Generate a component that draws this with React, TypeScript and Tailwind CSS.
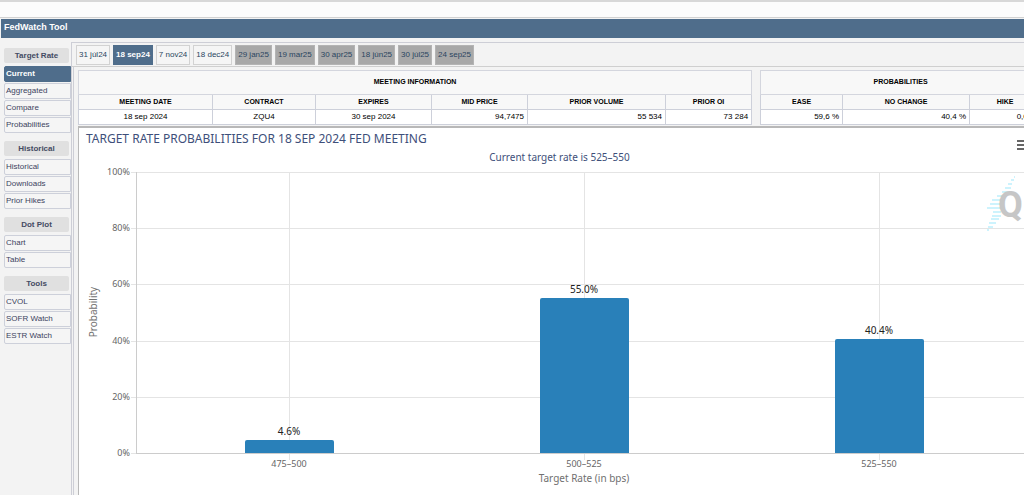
const NAV = [
  { title: "Target Rate", items: ["Current", "Aggregated", "Compare", "Probabilities"] },
  { title: "Historical", items: ["Historical", "Downloads", "Prior Hikes"] },
  { title: "Dot Plot", items: ["Chart", "Table"] },
  { title: "Tools", items: ["CVOL", "SOFR Watch", "ESTR Watch"] },
];

const MEETINGS = [
  { label: "31 júl24" },
  { label: "18 sep24", active: true },
  { label: "7 nov24" },
  { label: "18 dec24" },
  { label: "29 jan25", far: true },
  { label: "19 mar25", far: true },
  { label: "30 apr25", far: true },
  { label: "18 jún25", far: true },
  { label: "30 júl25", far: true },
  { label: "24 sep25", far: true },
];

const INFO = [
  { head: "MEETING DATE", value: "18 sep 2024", width: "w-[134px]" },
  { head: "CONTRACT", value: "ZQU4", width: "w-[103px]" },
  { head: "EXPIRES", value: "30 sep 2024", width: "w-[116px]" },
  { head: "MID PRICE", value: "94,7475", width: "w-[96px]", right: true },
  { head: "PRIOR VOLUME", value: "55 534", width: "w-[138px]", right: true },
  { head: "PRIOR OI", value: "73 284", width: "w-[86px]", right: true },
];

const PROBS = [
  { head: "EASE", value: "59,6 %", width: "w-[82px]", right: true },
  { head: "NO CHANGE", value: "40,4 %", width: "w-[127px]", right: true },
  { head: "HIKE", value: "0,0 %", width: "w-[71px]", right: true },
];

const BARS = [
  { range: "475–500", value: 4.6, x: 210 },
  { range: "500–525", value: 55.0, x: 505 },
  { range: "525–550", value: 40.4, x: 800 },
];

const TICKS = [0, 20, 40, 60, 80, 100];

// left edge, top and length of each logo stripe
const STRIPES = [
  [935, 12, 1],
  [932, 15, 3],
  [929, 19, 4],
  [926, 23, 6],
  [923, 27, 8],
  [918, 31, 6],
  [913, 35, 9],
  [911, 39, 11],
  [908, 43, 14],
  [914, 47, 8],
  [913, 51, 9],
  [912, 54, 8],
  [910, 58, 7],
  [909, 62, 5],
  [908, 65, 2],
];

type Column = { head: string; value: string; width: string; right?: boolean };

function DataTable({ title, columns }: { title: string; columns: Column[] }) {
  return (
    <table className="w-full table-fixed border-collapse border border-[#cdd0da] bg-white text-[8px] leading-[10px] text-black">
      <colgroup>
        {columns.map((c) => (
          <col key={c.head} className={c.width} />
        ))}
      </colgroup>
      <thead className="bg-[#f8f8f8] text-[7px]">
        <tr className="h-6">
          <th colSpan={columns.length} className="border border-[#d4d6de] pb-0.5 font-bold">
            {title}
          </th>
        </tr>
        <tr className="h-[15px]">
          {columns.map((c) => (
            <th key={c.head} className="border border-[#cdd0da] font-bold">
              {c.head}
            </th>
          ))}
        </tr>
      </thead>
      <tbody>
        <tr className="h-[15px]">
          {columns.map((c) => (
            <td
              key={c.head}
              className={`border border-[#cdd0da] px-[3px] ${c.right ? "text-right" : "text-center"}`}
            >
              {c.value}
            </td>
          ))}
        </tr>
      </tbody>
    </table>
  );
}

function Sidebar() {
  return (
    <nav className="flex w-[71px] shrink-0 flex-col gap-2 pt-[10px] pl-1">
      {NAV.map((group) => (
        <section key={group.title}>
          <h2 className="mr-0.5 mb-[3px] h-[15px] rounded-xs bg-[#e0e0e0] text-center text-[8px] leading-[15px] font-bold text-[#444b63]">
            {group.title}
          </h2>
          <ul className="flex flex-col gap-px">
            {group.items.map((item) => (
              <li key={item}>
                <a
                  href="#"
                  className={`block h-4 rounded-l-xs border pl-px text-[8px] leading-[14px] ${
                    item === "Current"
                      ? "border-[#4f6d8b] bg-[#4f6d8b] font-bold text-white"
                      : "border-[#cdd0da] bg-[#f5f5f5] text-[#3c4360]"
                  }`}
                >
                  {item}
                </a>
              </li>
            ))}
          </ul>
        </section>
      ))}
    </nav>
  );
}

function Tabs() {
  return (
    <div className="flex h-6 items-start gap-[3px] border-b border-[#cfcfcf] pt-0.5 pl-1">
      {MEETINGS.map((m) => (
        <button
          key={m.label}
          type="button"
          className={`h-5 border px-0.5 text-[8px] whitespace-nowrap ${
            m.active
              ? "border-[#4f6d8b] bg-[#4f6d8b] font-bold text-white"
              : m.far
                ? "border-[#b4b4b4] bg-[#a8a8a8] text-[#2a4560]"
                : "border-[#d2d2d2] bg-[#f5f5f5] text-[#2a4560]"
          }`}
        >
          {m.label}
        </button>
      ))}
    </div>
  );
}

function ProbabilityChart() {
  const y = (v: number) => Math.round(289 - v * 2.81);

  return (
    <svg
      viewBox="0 0 961 331"
      className="block w-full font-['Noto_Sans',sans-serif]"
      role="img"
      aria-label="Target rate probabilities"
    >
      {/* Grid */}
      <g stroke="#e4e4e4" shapeRendering="crispEdges">
        {TICKS.map((t) => (
          <line key={t} x1="52" x2="953" y1={y(t)} y2={y(t)} />
        ))}
        {BARS.map((b) => (
          <line key={b.range} x1={b.x} x2={b.x} y1="8" y2="296" />
        ))}
      </g>
      <g stroke="#cccccc" shapeRendering="crispEdges">
        <line x1="57" x2="57" y1="8" y2="289" />
        <line x1="57" x2="953" y1="289" y2="289" />
      </g>

      {/* Logo */}
      <g fill="#cdf3fd">
        {STRIPES.map(([x, top, w]) => (
          <rect key={top} x={x} y={top} width={w} height="2" />
        ))}
      </g>
      <text x="919" y="53" fontSize="36" fill="#c6c6c6" className="font-['Roboto',sans-serif] font-bold">
        Q
      </text>

      {/* Bars */}
      {BARS.map((b) => (
        <g key={b.range} textAnchor="middle">
          <path
            d={`M${b.x - 44} 289V${y(b.value) + 2}q0 -2 2 -2h85q2 0 2 2V289z`}
            fill="#2980b9"
          />
          <text x={b.x} y={y(b.value) - 5} fontSize="10" fill="#222">
            {b.value.toFixed(1)}%
          </text>
          <text x={b.x} y="303" fontSize="9" fill="#666">
            {b.range}
          </text>
        </g>
      ))}

      {/* Axis labels */}
      <g fontSize="9" fill="#666" textAnchor="end">
        {TICKS.map((t) => (
          <text key={t} x="51" y={y(t) + 3}>
            {t}%
          </text>
        ))}
      </g>
      <g fontSize="10" fill="#707070" textAnchor="middle">
        <text x="505" y="318">
          Target Rate (in bps)
        </text>
        <text transform="translate(18 148) rotate(-90)">Probability</text>
      </g>
    </svg>
  );
}

export default function App() {
  return (
    <div className="h-screen overflow-hidden bg-[#f3f3f3] font-['Liberation_Sans',Arial,sans-serif]">
      {/* The tool is a little wider than its frame and is cut off on the right */}
      <div className="-mr-4 flex h-full flex-col">
        <div className="h-[18px] shrink-0 border-t-2 border-b border-t-[#d8d8d8] border-b-[#d2d2d2] bg-[#fcfcfc]" />
        <header className="mt-px ml-px flex h-[19px] shrink-0 items-center bg-[#4f6d8b] pb-px pl-[3px]">
          <h1 className="text-[9px] font-bold text-white">FedWatch Tool</h1>
        </header>

        <div className="flex flex-1">
          <Sidebar />
          <main className="mt-1 flex min-w-0 flex-1 flex-col border-t border-l border-[#cdced6]">
            <Tabs />
            <div className="ml-px flex flex-1 flex-col border-l border-[#cdced6] pt-[3px] pl-1">
              <div className="grid grid-cols-[673fr_280fr] gap-2">
                <DataTable title="MEETING INFORMATION" columns={INFO} />
                <DataTable title="PROBABILITIES" columns={PROBS} />
              </div>

              <div className="mt-px flex-1 border-t-2 border-l border-[#b8b8b8] bg-white">
                <div className="flex h-[22px] items-start justify-between pr-[9px] pl-[7px]">
                  <h2 className="font-['Noto_Sans',sans-serif] text-[12px] leading-[22px] text-[#3e4f7a]">
                    TARGET RATE PROBABILITIES FOR 18 SEP 2024 FED MEETING
                  </h2>
                  <button type="button" aria-label="Chart menu" className="mt-3 flex flex-col gap-0.5">
                    <span className="h-0.5 w-[14px] bg-[#666]" />
                    <span className="h-0.5 w-[14px] bg-[#666]" />
                    <span className="h-0.5 w-[14px] bg-[#666]" />
                  </button>
                </div>
                <p className="text-center font-['Noto_Sans',sans-serif] text-[10px] leading-[14px] text-[#3e4f7a]">
                  Current target rate is 525–550
                </p>
                <ProbabilityChart />
              </div>
            </div>
          </main>
        </div>
      </div>
    </div>
  );
}
